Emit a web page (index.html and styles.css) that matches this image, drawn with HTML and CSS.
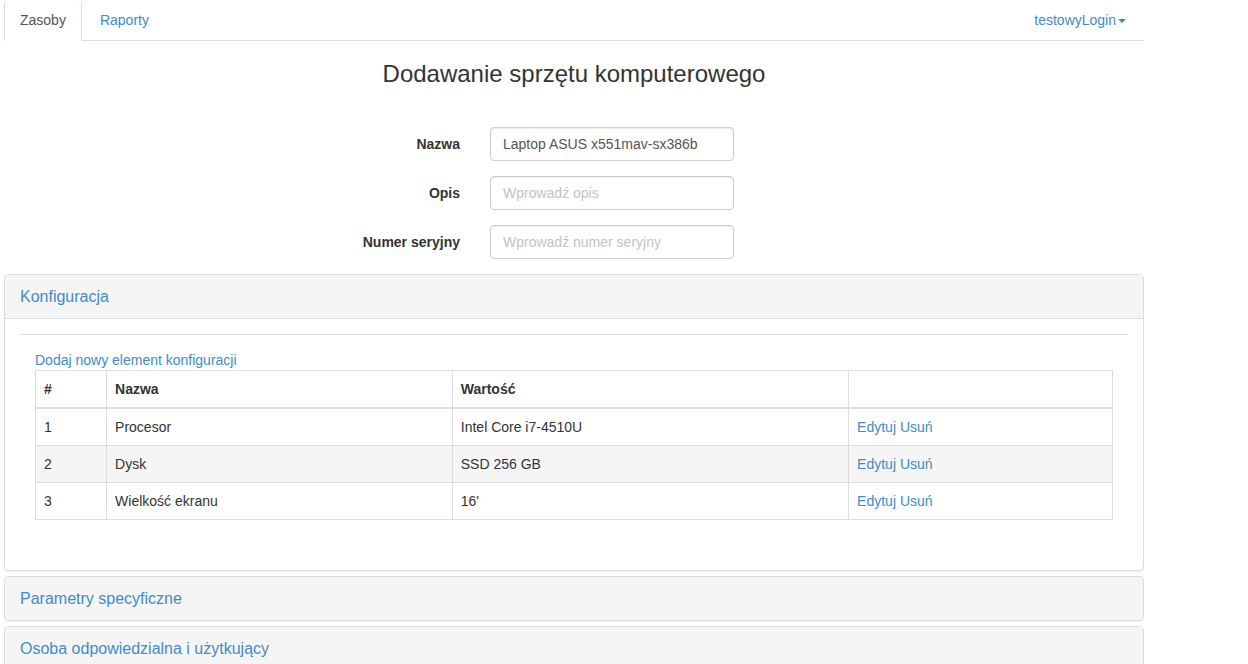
FILE: index.html
```html
<!DOCTYPE html>
<html lang="pl">
<head>
<meta charset="utf-8">
<meta name="viewport" content="width=device-width, initial-scale=1">
<title>Dodawanie sprzętu komputerowego</title>
<link rel="stylesheet" href="styles.css">
</head>
<body>
<div class="container">
  <nav class="tabs">
    <a class="tab tab-active" href="#zasoby">Zasoby</a>
    <a class="tab" href="#raporty">Raporty</a>
    <a class="tab tab-user" href="#login">testowyLogin<span class="caret"></span></a>
  </nav>

  <h1 class="title">Dodawanie sprzętu komputerowego</h1>

  <form class="form">
    <label class="label" for="nazwa">Nazwa</label>
    <input class="input" id="nazwa" type="text" value="Laptop ASUS x551mav-sx386b">
    <label class="label" for="opis">Opis</label>
    <input class="input" id="opis" type="text" placeholder="Wprowadź opis">
    <label class="label" for="numer">Numer seryjny</label>
    <input class="input" id="numer" type="text" placeholder="Wprowadź numer seryjny">
  </form>

  <div class="panels">
    <section class="panel">
      <h2 class="panel-heading"><a href="#konfiguracja">Konfiguracja</a></h2>
      <div class="panel-body" id="konfiguracja">
        <div class="config">
          <a href="#dodaj">Dodaj nowy element konfiguracji</a>
          <table class="table">
            <colgroup>
              <col class="col-number">
              <col class="col-name">
              <col class="col-value">
              <col>
            </colgroup>
            <thead>
              <tr><th>#</th><th>Nazwa</th><th>Wartość</th><th></th></tr>
            </thead>
            <tbody>
              <tr><td>1</td><td>Procesor</td><td>Intel Core i7-4510U</td><td><a href="#edytuj-1">Edytuj</a> <a href="#usun-1">Usuń</a></td></tr>
              <tr><td>2</td><td>Dysk</td><td>SSD 256 GB</td><td><a href="#edytuj-2">Edytuj</a> <a href="#usun-2">Usuń</a></td></tr>
              <tr><td>3</td><td>Wielkość ekranu</td><td>16'</td><td><a href="#edytuj-3">Edytuj</a> <a href="#usun-3">Usuń</a></td></tr>
            </tbody>
          </table>
        </div>
      </div>
    </section>
    <section class="panel">
      <h2 class="panel-heading"><a href="#parametry">Parametry specyficzne</a></h2>
    </section>
    <section class="panel">
      <h2 class="panel-heading"><a href="#osoba">Osoba odpowiedzialna i użytkujący</a></h2>
    </section>
  </div>
</div>
</body>
</html>
```
FILE: styles.css
```css
* {
  box-sizing: border-box;
}

body {
  margin: 0;
  background: #fff;
  color: #333;
  font-family: "Liberation Sans", Arial, sans-serif;
  font-size: 14px;
  line-height: 20px;
}

a {
  color: #428bca;
  text-decoration: none;
}

.container {
  max-width: 1140px;
  margin: 0 4px;
}

.tabs {
  display: flex;
  gap: 2px;
  border-bottom: 1px solid #ddd;
}

.tab {
  margin-bottom: -1px;
  padding: 10px 15px;
  border: 1px solid transparent;
  border-top: 0;
  border-radius: 4px 4px 0 0;
}

.tab-active {
  background: #fff;
  border-color: #ddd;
  border-bottom-color: #fff;
  color: #555;
}

.tab-user {
  margin-left: auto;
  margin-right: 2px;
}

.caret {
  display: inline-block;
  margin-left: 2px;
  vertical-align: middle;
  border-top: 4px solid;
  border-left: 4px solid transparent;
  border-right: 4px solid transparent;
}

.title {
  margin: 20px 0 40px;
  font-size: 24px;
  line-height: 26px;
  font-weight: 400;
  text-align: center;
}

.form {
  display: grid;
  grid-template-columns: 40% minmax(0, 244px);
  gap: 15px 30px;
  align-items: center;
  margin-bottom: 15px;
}

.label {
  font-weight: 700;
  text-align: right;
}

.input {
  width: 100%;
  height: 34px;
  padding: 6px 12px;
  border: 1px solid #ccc;
  border-radius: 4px;
  background: #fff;
  box-shadow: inset 0 1px 1px rgba(0, 0, 0, 0.075);
  color: #555;
  font: inherit;
}

.input::placeholder {
  color: #c3c3c3;
  opacity: 1;
}

.panels {
  display: flex;
  flex-direction: column;
  gap: 5px;
}

.panel {
  overflow: hidden;
  border: 1px solid #ddd;
  border-radius: 4px;
  background: #fff;
  box-shadow: 0 1px 1px rgba(0, 0, 0, 0.05);
}

.panel-heading {
  margin: 0;
  padding: 10px 15px;
  background: #f5f5f5;
  font-size: 16px;
  line-height: 23px;
  font-weight: 400;
}

.panel-body {
  padding: 15px 15px 30px;
  border-top: 1px solid #ddd;
}

.config {
  padding: 15px 15px 20px;
  border-top: 1px solid #ddd;
}

.table {
  width: 100%;
  table-layout: fixed;
  border-collapse: collapse;
}

.col-number {
  width: 6.6%;
}

.col-name {
  width: 32.1%;
}

.col-value {
  width: 36.8%;
}

.table th,
.table td {
  padding: 8px;
  border: 1px solid #ddd;
  text-align: left;
}

.table th {
  border-bottom-width: 2px;
}

.table tbody tr:nth-child(even) {
  background: #f5f5f5;
}
```
